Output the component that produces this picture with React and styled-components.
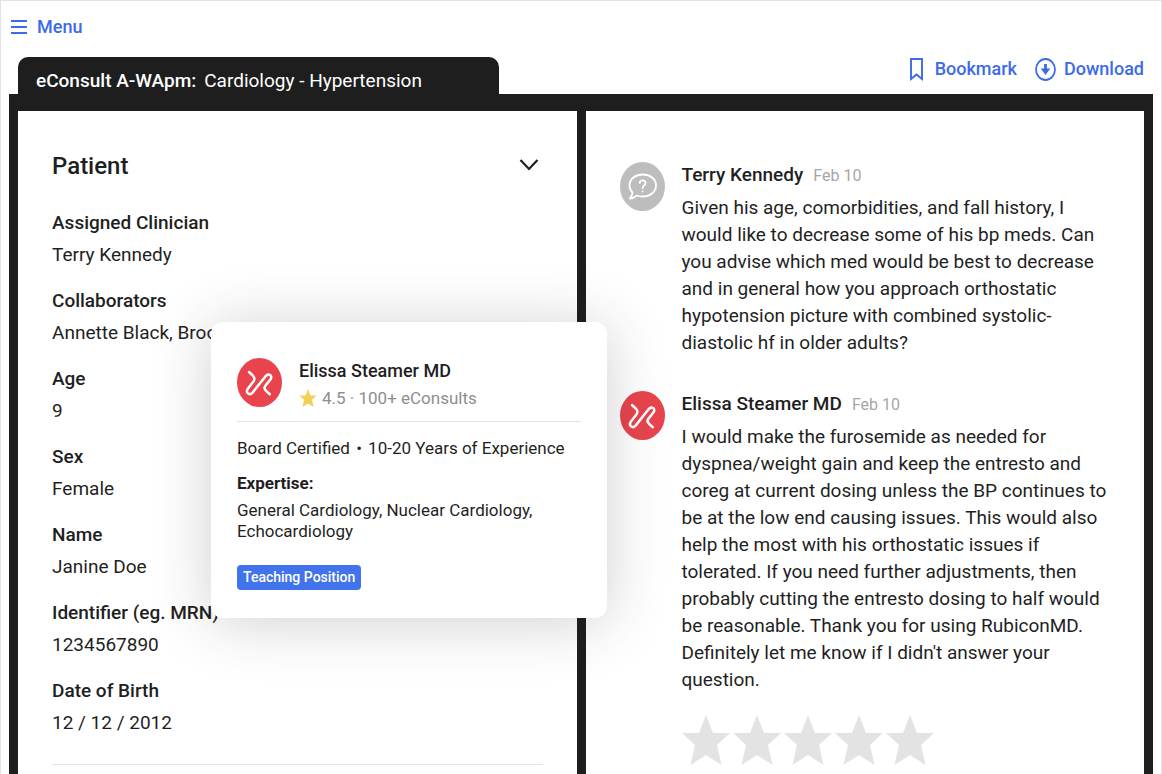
import React, { useState } from "react";
import styled, { createGlobalStyle } from "styled-components";

const colors = {
  ink: "#1f1f1f",
  frame: "#1e1e1e",
  blue: "#3b6be6",
  tag: "#4173ec",
  red: "#e9444d",
  muted: "#8e8e8e",
  date: "#a6a6a6",
  line: "#e2e2e2",
  star: "#e3e3e3",
  gold: "#f4cf55",
};

const GlobalStyle = createGlobalStyle`
  * {
    box-sizing: border-box;
  }
  body {
    margin: 0;
    background: #fff;
    color: ${colors.ink};
    font-family: Roboto, "Liberation Sans", sans-serif;
    font-size: 19px;
    overflow: hidden;
  }
  button {
    font: inherit;
    color: inherit;
    background: none;
    border: none;
    padding: 0;
    cursor: pointer;
  }
`;

const Styled = {
  Page: styled.div`
    position: relative;
    height: 100vh;
    display: flex;
    flex-direction: column;
    padding: 0 8px;
    border: 1px solid ${colors.line};
    border-bottom: none;
    overflow: hidden;
  `,
  TopBar: styled.header`
    height: 56px;
    flex: none;
    display: flex;
    align-items: center;
    padding: 0 2px 4px;
  `,
  LinkButton: styled.button`
    display: flex;
    align-items: center;
    gap: ${(props) => props.$gap || 8}px;
    color: ${colors.blue};
    font-size: 18px;
    font-weight: 500;
    line-height: 24px;
  `,
  TabRow: styled.div`
    display: flex;
    justify-content: space-between;
    align-items: flex-start;
    height: 37px;
    flex: none;
    padding: 0 9px;
  `,
  Tab: styled.h1`
    height: 100%;
    margin: 0;
    padding: 11px 77px 0 18px;
    border-radius: 10px 10px 0 0;
    background: ${colors.frame};
    color: #fff;
    font-size: 19px;
    line-height: 26px;
    font-weight: 400;
    white-space: nowrap;

    strong {
      font-weight: 500;
      margin-right: 8px;
    }
  `,
  Actions: styled.div`
    display: flex;
    gap: 18px;
  `,
  Frame: styled.main`
    flex: 1;
    display: grid;
    grid-template-columns: 1fr 1fr;
    gap: 9px;
    padding: 17px 9px 0;
    background: ${colors.frame};
    min-height: 0;
  `,
  Panel: styled.section`
    background: #fff;
    padding: 39px 34px 0;
    overflow: hidden;
  `,
  Thread: styled.section`
    background: #fff;
    padding: 48px 34px 0;
    overflow: hidden;
  `,
  PanelHeader: styled.div`
    display: flex;
    justify-content: space-between;
    align-items: center;
    margin-bottom: 25px;
    padding-right: 4px;
  `,
  PanelTitle: styled.h2`
    margin: 0;
    font-size: 24px;
    line-height: 32px;
    font-weight: 500;
  `,
  IconButton: styled.button`
    display: flex;
  `,
  Fields: styled.dl`
    display: flex;
    flex-direction: column;
    gap: 14px;
    margin: 0;
    padding-bottom: 25px;
    border-bottom: 1px solid ${colors.line};
    line-height: 32px;

    dt {
      font-weight: 500;
    }
    dd {
      margin: 0;
    }
  `,
  Message: styled.article`
    display: flex;
    gap: 17px;
    margin-bottom: 32px;
  `,
  MessageBody: styled.div`
    flex: 1;
  `,
  Avatar: styled.svg`
    width: 45px;
    height: 49px;
    flex: none;
    margin-top: ${(props) => props.$top || 0}px;
  `,
  Author: styled.h3`
    margin: 0 0 2px;
    font-size: 19px;
    line-height: 32px;
    font-weight: 500;

    time {
      margin-left: 10px;
      font-size: 16px;
      font-weight: 400;
      color: ${colors.date};
    }
  `,
  Text: styled.p`
    margin: 0;
    font-size: 19px;
    line-height: 27px;
    white-space: pre-line;
  `,
  Rating: styled.fieldset`
    display: flex;
    gap: 3px;
    margin: 22px 0 0;
    padding: 0;
    border: none;

    label {
      position: relative;
      display: flex;
    }
    input {
      position: absolute;
      inset: 0;
      margin: 0;
      opacity: 0;
    }
  `,
  Card: styled.aside`
    position: absolute;
    top: 321px;
    left: 210px;
    width: 396px;
    padding: 36px 26px 28px;
    border-radius: 12px;
    background: #fff;
    box-shadow: 0 4px 60px rgba(40, 40, 40, 0.22);
    font-size: 17px;
    line-height: 21px;
  `,
  CardHeader: styled.div`
    display: flex;
    gap: 17px;
    padding-bottom: 9px;
    border-bottom: 1px solid ${colors.line};
  `,
  CardName: styled.h3`
    margin: 0;
    font-size: 18px;
    line-height: 26px;
    font-weight: 500;
  `,
  CardMeta: styled.div`
    display: flex;
    align-items: center;
    gap: 5px;
    line-height: 28px;
    color: ${colors.muted};
  `,
  CardLine: styled.p`
    margin: ${(props) => props.$top}px 0 0;
    font-weight: ${(props) => (props.$bold ? 700 : 400)};
  `,
  Bullet: styled.span`
    margin: 0 2px;
  `,
  Tag: styled.span`
    display: block;
    width: fit-content;
    margin-top: 23px;
    padding: 0 6px;
    border-radius: 4px;
    background: ${colors.tag};
    color: #fff;
    font-size: 14px;
    font-weight: 500;
    line-height: 25px;
  `,
};

const STAR = "M24 0 L31 18 H48 L35 30 L39.500 50 L24 40 L8.500 50 L13 30 L0 18 H17 Z";

const fields = [
  ["Assigned Clinician", "Terry Kennedy"],
  ["Collaborators", "Annette Black, Brooklyn"],
  ["Age", "9"],
  ["Sex", "Female"],
  ["Name", "Janine Doe"],
  ["Identifier (eg. MRN)", "1234567890"],
  ["Date of Birth", "12 / 12 / 2012"],
];

const question = `Given his age, comorbidities, and fall history, I
would like to decrease some of his bp meds. Can
you advise which med would be best to decrease
and in general how you approach orthostatic
hypotension picture with combined systolic-
diastolic hf in older adults?`;

const answer = `I would make the furosemide as needed for
dyspnea/weight gain and keep the entresto and
coreg at current dosing unless the BP continues to
be at the low end causing issues. This would also
help the most with his orthostatic issues if
tolerated. If you need further adjustments, then
probably cutting the entresto dosing to half would
be reasonable. Thank you for using RubiconMD.
Definitely let me know if I didn't answer your
question.`;

const QuestionAvatar = (props) => (
  <Styled.Avatar viewBox="0 0 45 49" aria-hidden="true" {...props}>
    <ellipse cx="22.500" cy="24.500" rx="22.500" ry="24.500" fill="#bdbdbd" />
    <g fill="none" stroke="#fff" strokeWidth="1.800" strokeLinecap="round" strokeLinejoin="round">
      <path d="M12.500 30.500 C10.500 28.500 9.500 26 9.500 23.500 C9.500 17 15.500 12.500 22.800 12.500 C30 12.500 36 17 36 23.500 C36 30 30 34.500 22.800 34.500 C20.500 34.500 18.500 34.200 17 33.500 C14.500 35.500 12 36.500 9.800 36.500 C11.500 34.500 12.500 32.500 12.500 30.500 Z" />
      <path d="M19.800 21 C19.800 17.500 25.500 17.500 25.500 21 C25.500 23.500 22.600 23.400 22.600 26" />
      <path d="M22.600 29.300 V29.500" />
    </g>
  </Styled.Avatar>
);

const DoctorAvatar = (props) => (
  <Styled.Avatar viewBox="0 0 45 49" aria-hidden="true" {...props}>
    <ellipse cx="22.500" cy="24.500" rx="22.500" ry="24.500" fill={colors.red} />
    <path
      d="M12 14 L15.800 17.500 C17.600 19.400 17.800 21.600 16.400 23.600 L11 30.500 C8 34.700 12.500 38 15.600 34.600 L28.600 18.200 C31.600 14.800 36 17.700 33.600 21.300 L28.500 27.600 C27 29.600 27.400 31.400 29 32.800 L32.800 36.200"
      fill="none"
      stroke="#fff"
      strokeWidth="2.500"
      strokeLinecap="round"
      strokeLinejoin="round"
    />
  </Styled.Avatar>
);

const App = () => {
  const [open, setOpen] = useState(true);
  const [rating, setRating] = useState(0);

  return (
    <Styled.Page>
      <GlobalStyle />
      <Styled.TopBar>
        <Styled.LinkButton $gap={10}>
          <svg width="16" height="14" viewBox="0 0 16 14" stroke="currentColor" strokeWidth="2">
            <path d="M0 1 H16 M0 7 H16 M0 13 H16" />
          </svg>
          Menu
        </Styled.LinkButton>
      </Styled.TopBar>

      <Styled.TabRow>
        <Styled.Tab>
          <strong>eConsult A-WApm:</strong>
          Cardiology - Hypertension
        </Styled.Tab>
        <Styled.Actions>
          <Styled.LinkButton $gap={12}>
            <svg width="13" height="23" viewBox="0 0 13 23" fill="none" stroke="currentColor" strokeWidth="1.900">
              <path d="M1 1 H12 V21 L6.500 16.500 L1 21 Z" />
            </svg>
            Bookmark
          </Styled.LinkButton>
          <Styled.LinkButton>
            <svg width="21" height="23" viewBox="0 0 21 23" fill="none" stroke="currentColor" strokeWidth="1.800">
              <ellipse cx="10.500" cy="11.500" rx="9.500" ry="10.500" />
              <path d="M10.500 6 V13" strokeWidth="2.800" />
              <path d="M7.500 11.500 H13.500 L10.500 15.500 Z" fill="currentColor" />
            </svg>
            Download
          </Styled.LinkButton>
        </Styled.Actions>
      </Styled.TabRow>

      <Styled.Frame>
        <Styled.Panel>
          <Styled.PanelHeader>
            <Styled.PanelTitle>Patient</Styled.PanelTitle>
            <Styled.IconButton aria-label="Toggle patient" onClick={() => setOpen(!open)}>
              <svg width="20" height="14" viewBox="0 0 20 14" fill="none" stroke={colors.ink} strokeWidth="2.200">
                <path d="M1.500 1 L10 10 L18.500 1" />
              </svg>
            </Styled.IconButton>
          </Styled.PanelHeader>
          {open && (
            <Styled.Fields>
              {fields.map(([label, value]) => (
                <div key={label}>
                  <dt>{label}</dt>
                  <dd>{value}</dd>
                </div>
              ))}
            </Styled.Fields>
          )}
        </Styled.Panel>

        <Styled.Thread>
          <Styled.Message>
            <QuestionAvatar $top={3} />
            <Styled.MessageBody>
              <Styled.Author>
                Terry Kennedy<time>Feb 10</time>
              </Styled.Author>
              <Styled.Text>{question}</Styled.Text>
            </Styled.MessageBody>
          </Styled.Message>
          <Styled.Message>
            <DoctorAvatar $top={3} />
            <Styled.MessageBody>
              <Styled.Author>
                Elissa Steamer MD<time>Feb 10</time>
              </Styled.Author>
              <Styled.Text>{answer}</Styled.Text>
              <Styled.Rating>
                {[1, 2, 3, 4, 5].map((n) => (
                  <label key={n}>
                    <input
                      type="radio"
                      name="rating"
                      aria-label={`${n} stars`}
                      checked={rating === n}
                      onChange={() => setRating(n)}
                    />
                    <svg width="48" height="50" viewBox="0 0 48 50">
                      <path d={STAR} fill={n <= rating ? colors.gold : colors.star} />
                    </svg>
                  </label>
                ))}
              </Styled.Rating>
            </Styled.MessageBody>
          </Styled.Message>
        </Styled.Thread>
      </Styled.Frame>

      <Styled.Card>
        <Styled.CardHeader>
          <DoctorAvatar />
          <div>
            <Styled.CardName>Elissa Steamer MD</Styled.CardName>
            <Styled.CardMeta>
              <svg width="18" height="18" viewBox="0 0 48 50">
                <path d={STAR} fill={colors.gold} />
              </svg>
              4.5 · 100+ eConsults
            </Styled.CardMeta>
          </div>
        </Styled.CardHeader>
        <Styled.CardLine $top={16}>
          Board Certified <Styled.Bullet>•</Styled.Bullet> 10-20 Years of Experience
        </Styled.CardLine>
        <Styled.CardLine $top={14} $bold>
          Expertise:
        </Styled.CardLine>
        <Styled.CardLine $top={6}>General Cardiology, Nuclear Cardiology, Echocardiology</Styled.CardLine>
        <Styled.Tag>Teaching Position</Styled.Tag>
      </Styled.Card>
    </Styled.Page>
  );
};

export default App;
